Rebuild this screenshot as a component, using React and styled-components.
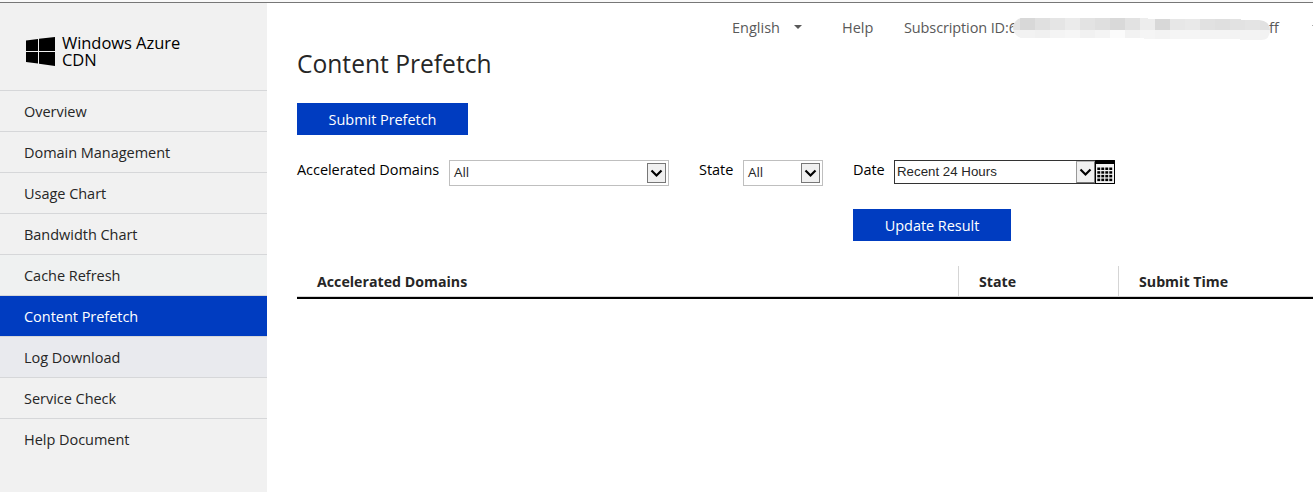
import React from "react";
import styled, { createGlobalStyle, css } from "styled-components";

const GlobalStyle = createGlobalStyle`
  *, *::before, *::after { box-sizing: border-box; }
  html, body { margin: 0; height: 100%; overflow: hidden; background: #fff; }
  body { font-family: "Open Sans", "Noto Sans", sans-serif; font-size: 14.5px; color: #262626; }
`;

const Page = styled.div`
  height: 492px;
  display: flex;
  flex-direction: column;
  overflow: hidden;
`;

const WindowEdge = styled.div`
  flex: none;
  height: 3px;
  background: #f9f9f9;
  border-bottom: 1px solid #777;
`;

const Body = styled.div`
  flex: 1;
  display: flex;
  min-height: 0;
`;

const Sidebar = styled.nav`
  flex: none;
  width: 267px;
  background: #f1f1f1;
`;

const Brand = styled.div`
  height: 87px;
  display: flex;
  align-items: flex-start;
  gap: 6px;
  padding: 32px 0 0 26px;
`;

const BrandLogo = styled.svg`
  width: 30px;
  height: 32px;
`;

const BrandName = styled.div`
  margin-top: -1px;
  color: #000;
  font-size: 16.5px;
  line-height: 17px;
  letter-spacing: -0.05px;
`;

const NavItem = styled.a`
  display: flex;
  align-items: center;
  height: 41px;
  padding: 1px 0 0 24px;
  border-top: 1px solid #d6d7d9;
  color: #262626;
  letter-spacing: -0.03px;
  ${(p) => p.$state === "hover" && css`background: #e9eaee;`}
  ${(p) => p.$state === "soft" && css`background: #eff1f1;`}
  ${(p) => p.$state === "active" && css`background: #003cc0; color: #fff;`}
`;

const Main = styled.main`
  flex: 1;
  min-width: 0;
  padding-left: 30px;
`;

const TopBar = styled.header`
  display: flex;
  align-items: center;
  height: 48px;
  padding-left: 435px;
  color: #595959;
  white-space: nowrap;
`;

const Language = styled.div`
  flex: none;
  display: flex;
  align-items: center;
  gap: 14px;
  width: 110px;
`;

const Caret = styled.span`
  flex: none;
  border: 4px solid transparent;
  border-top-color: #595959;
  border-bottom: 0;
`;

const HelpLink = styled.div`
  flex: none;
  width: 62px;
`;

const Subscription = styled.div`
  flex: none;
  position: relative;
  display: flex;
  width: 408px;
`;

const SubscriptionHead = styled.span`
  width: 365px;
  letter-spacing: -0.12px;
`;

const SubscriptionTail = styled.span`
  flex: 1;
`;

const Redaction = styled.svg`
  position: absolute;
  left: 109px;
  top: 0;
  width: 258px;
  height: 24px;
`;

const Title = styled.h1`
  margin: 0;
  height: 52px;
  font-size: 24.6px;
  font-weight: 400;
  line-height: 26px;
`;

const Button = styled.button`
  display: block;
  width: ${(p) => p.$width}px;
  height: 32px;
  padding: 0;
  border: 0;
  background: #003cc0;
  color: #fff;
  font: inherit;
  letter-spacing: -0.05px;
`;

const Filters = styled.div`
  display: flex;
  align-items: flex-start;
  gap: 30px;
  height: 131px;
  padding-top: 25px;
`;

const Field = styled.div`
  display: flex;
  align-items: flex-start;
  width: ${(p) => p.$width}px;
`;

const Label = styled.label`
  flex: none;
  width: ${(p) => p.$width}px;
  color: #000;
  line-height: 20px;
  letter-spacing: -0.05px;
  white-space: nowrap;
`;

const SelectBox = styled.div`
  flex: 1;
  display: flex;
  align-items: center;
  justify-content: space-between;
  height: 26px;
  padding: 0 2px 0 4px;
  border: 1px solid #bfbfbf;
  background: #fff;
  font-size: 13.5px;
  letter-spacing: -0.1px;
`;

const SelectValue = styled.span`
  padding-bottom: 2px;
`;

const SelectArrow = styled.span`
  display: flex;
  align-items: center;
  justify-content: center;
  width: 19px;
  height: 20px;
  border: 1px solid #777;
  background: #f0f0f0;
`;

const DateColumn = styled.div`
  display: flex;
  flex-direction: column;
  gap: 25px;
`;

const DateBox = styled.div`
  flex: 1;
  display: flex;
  align-items: center;
  height: 24px;
  padding-left: 2px;
  border: 1px solid #333;
  border-right: 0;
  font-family: "Liberation Sans", Arial, sans-serif;
  font-size: 13.3px;
`;

const DateText = styled.span`
  flex: 1;
  padding-bottom: 2px;
`;

const DateArrow = styled(SelectArrow)`
  height: 22px;
  border-color: #b5b5b5 #777 #777 #999;
`;

const CalendarIcon = styled.svg`
  width: 20px;
  height: 24px;
  margin: -1px 0;
`;

const TableHead = styled.div`
  display: grid;
  grid-template-columns: 661px 160px 1fr;
  height: 33px;
  border-bottom: 2px solid #000;
  box-shadow: inset 0 -1px #d5d5d5;
`;

const HeadCell = styled.div`
  padding-left: 20px;
  border-left: ${(p) => (p.$first ? "0" : "1px solid #d5d5d5")};
  font-size: 14.2px;
  font-weight: 700;
  line-height: 31px;
`;

const NAV = [
  ["Overview"],
  ["Domain Management"],
  ["Usage Chart"],
  ["Bandwidth Chart"],
  ["Cache Refresh", "soft"],
  ["Content Prefetch", "active"],
  ["Log Download", "hover"],
  ["Service Check"],
  ["Help Document"],
];

const TOP_SHADES = ["#e3e3e3", "#d8d8d8", "#e0e0e0", "#e5e5e5", "#ebebeb", "#e3e3e3", "#dfdfdf", "#d9d9d9", "#e2e2e2", "#ededed", "#d8d8d8", "#e7e7e7", "#e9e9e9", "#e1e1e1", "#dfdfdf", "#e2e2e2", "#e4e4e4", "#e1e1e1"];
const LOW_SHADES = ["#f1f1f1", "#f2f2f2", "#f0f0f0", "#f4f4f4", "#f6f6f6", "#f1f1f1", "#f4f4f4", "#fbfbfb", "#f2f2f2", "#f5f5f5", "#f3f3f3", "#f5f5f5", "#f5f5f5", "#f4f4f4", "#f4f4f4", "#f3f3f3", "#f3f3f3", "#f2f2f2"];

const cellX = (i) => (i === 0 ? 0 : 7 + (i - 1) * 15);

const Chevron = () => (
  <svg width="13" height="9" viewBox="0 0 13 9">
    <path d="M1.5 1.5 6.5 6.5 11.5 1.5" fill="none" stroke="#000" strokeWidth="2.2" />
  </svg>
);

const Select = ({ value }) => (
  <SelectBox>
    <SelectValue>{value}</SelectValue>
    <SelectArrow><Chevron /></SelectArrow>
  </SelectBox>
);

export default function App() {
  return (
    <Page>
      <GlobalStyle />
      <WindowEdge />
      <Body>
        <Sidebar>
          <Brand>
            <BrandLogo viewBox="0 0 30 32">
              <path d="M0 5.5 12 4V16H0ZM13 3.8 29 2V16H13ZM0 17H12V28.5L0 27ZM13 17H29V31L13 28.8Z" fill="#000" />
            </BrandLogo>
            <BrandName>Windows Azure<br />CDN</BrandName>
          </Brand>
          {NAV.map(([name, state]) => (
            <NavItem key={name} $state={state}>{name}</NavItem>
          ))}
        </Sidebar>
        <Main>
          <TopBar>
            <Language>English<Caret /></Language>
            <HelpLink>Help</HelpLink>
            <Subscription>
              <SubscriptionHead>Subscription ID:6</SubscriptionHead>
              <SubscriptionTail>ff</SubscriptionTail>
              <Redaction viewBox="0 0 258 24">
                <clipPath id="brush">
                  <path d="M8 0H135V1H228V2H246Q257 3 257 12Q257 22 248 22H227V21H131V20H8Q0 17 0 9Q1 2 8 0Z" />
                </clipPath>
                <g clipPath="url(#brush)">
                  {TOP_SHADES.map((c, i) => (
                    <g key={i}>
                      <rect x={cellX(i)} y="0" width="15" height="12" fill={c} />
                      <rect x={cellX(i)} y="12" width="15" height="12" fill={LOW_SHADES[i]} />
                    </g>
                  ))}
                </g>
              </Redaction>
            </Subscription>
            <Caret />
          </TopBar>
          <Title>Content Prefetch</Title>
          <Button $width={171}>Submit Prefetch</Button>
          <Filters>
            <Field $width={372}>
              <Label $width={152}>Accelerated Domains</Label>
              <Select value="All" />
            </Field>
            <Field $width={124}>
              <Label $width={44}>State</Label>
              <Select value="All" />
            </Field>
            <DateColumn>
              <Field $width={262}>
                <Label $width={41}>Date</Label>
                <DateBox>
                  <DateText>Recent 24 Hours</DateText>
                  <DateArrow><Chevron /></DateArrow>
                  <CalendarIcon viewBox="0 0 20 24">
                    <rect width="20" height="24" rx="1" fill="#000" />
                    <rect x="1" y="4" width="18" height="19" fill="#f4f4f4" />
                    {[0, 1, 2, 3].map((r) => [0, 1, 2, 3].map((c) => (
                      <rect key={`${r}${c}`} x={2.3 + c * 4} y={7.5 + r * 3.7} width="2.9" height="2.5" fill="#000" />
                    )))}
                  </CalendarIcon>
                </DateBox>
              </Field>
              <Button $width={158}>Update Result</Button>
            </DateColumn>
          </Filters>
          <TableHead>
            <HeadCell $first>Accelerated Domains</HeadCell>
            <HeadCell>State</HeadCell>
            <HeadCell>Submit Time</HeadCell>
          </TableHead>
        </Main>
      </Body>
    </Page>
  );
}
